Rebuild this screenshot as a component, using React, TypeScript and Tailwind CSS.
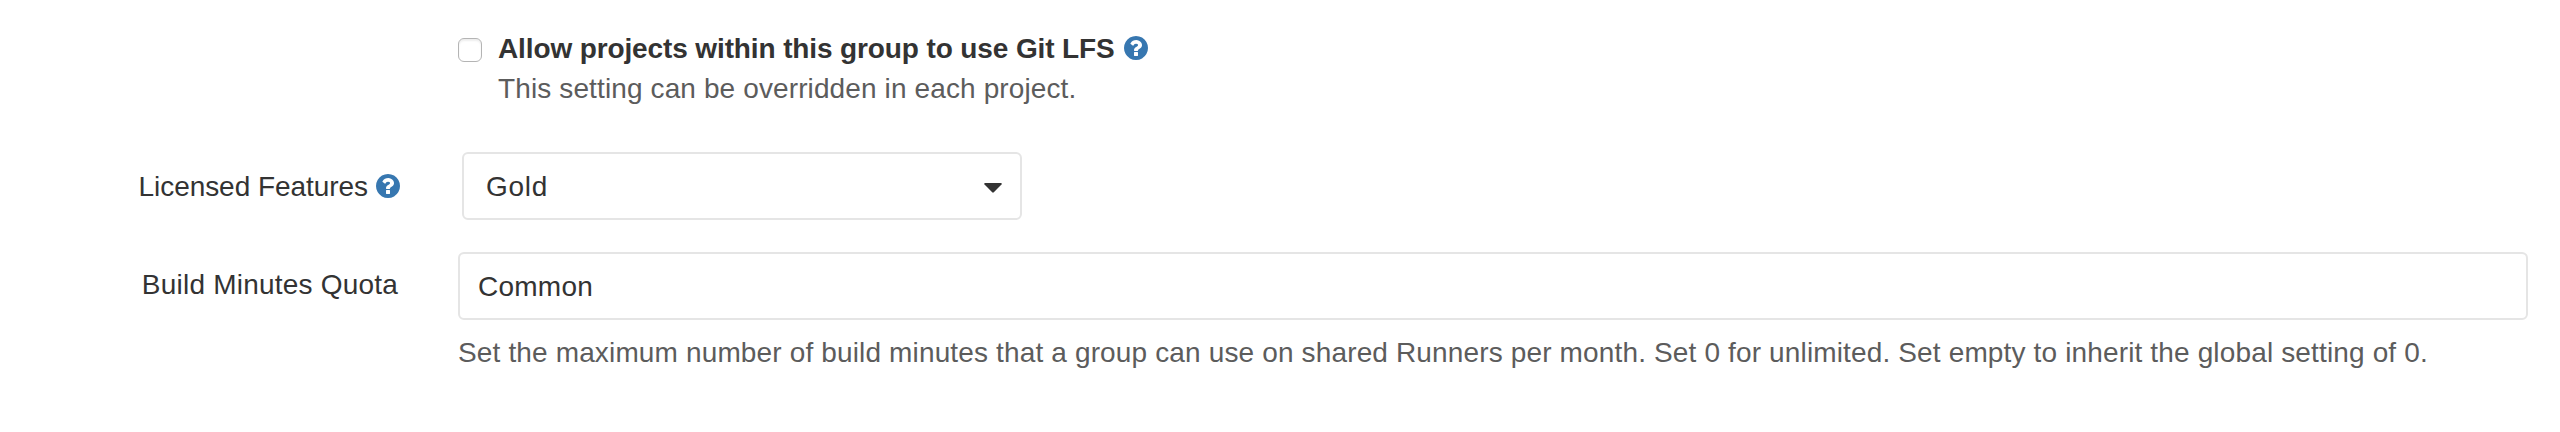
function HelpIcon({ className }: { className: string }) {
  return (
    <svg viewBox="128 128 1536 1536" className={`size-6 shrink-0 fill-[#3777b0] ${className}`} aria-hidden="true">
      <path d="M1024 1376v-192q0-14-9-23t-23-9h-192q-14 0-23 9t-9 23v192q0 14 9 23t23 9h192q14 0 23-9t9-23zm256-672q0-88-55.5-163t-138.5-116-170-41q-243 0-371 213-15 24 8 42l132 100q7 6 19 6 16 0 25-12 53-68 86-92 34-24 86-24 48 0 85.5 26t37.5 59q0 38-20 61t-68 45q-63 28-115.5 86.5t-52.5 125.5v36q0 14 9 23t23 9h192q14 0 23-9t9-23q0-19 21.5-49.5t54.5-49.5q32-18 49-28.5t46-35 44.5-48 28-60.5 12.5-81zm384 192q0 209-103 385.5t-279.5 279.5-385.5 103-385.5-103-279.5-279.5-103-385.5 103-385.5 279.5-279.5 385.5-103 385.5 103 279.5 279.5 103 385.5z" />
    </svg>
  );
}

export default function App() {
  return (
    <form className="flex h-[432px] w-[2560px] flex-col bg-white pt-[29px] font-['Liberation_Sans',Arial,sans-serif] text-[28px] leading-10 text-[#333333]">
      <div className="flex pl-[458px]">
        <input
          id="lfs"
          type="checkbox"
          className="mt-[9px] size-6 shrink-0 appearance-none rounded-[6px] border border-[#b4b4b4] bg-white shadow-[inset_0_2px_2px_#eeeeee]"
        />
        <div className="ml-4">
          <div className="flex">
            <label htmlFor="lfs" className="whitespace-nowrap font-bold tracking-[-0.12px]">
              Allow projects within this group to use Git LFS
            </label>
            <HelpIcon className="mt-[7px] ml-[9px]" />
          </div>
          <p className="whitespace-nowrap tracking-[0.12px] text-[#5c5c5c]">
            This setting can be overridden in each project.
          </p>
        </div>
      </div>

      <div className="mt-[43px] flex">
        <div className="mr-[62px] flex w-[400px] justify-end pt-[15px]">
          <span className="whitespace-nowrap tracking-[-0.05px]">Licensed Features</span>
          <HelpIcon className="mt-[7px] ml-2" />
        </div>
        <button
          type="button"
          className="flex h-[68px] w-[560px] items-center justify-between rounded-[6px] border-2 border-[#e5e5e5] bg-white pr-[18px] pl-[22px]"
        >
          <span className="pt-0.5 tracking-[0.7px]">Gold</span>
          <svg viewBox="0 0 18 10" className="mt-1 h-2.5 w-[18px] fill-[#333333]" aria-hidden="true">
            <path d="M1 0h16q1.2.4.5 1.5L9.8 9.3q-.8.8-1.6 0L.5 1.5Q-.2.4 1 0z" />
          </svg>
        </button>
      </div>

      <div className="mt-8 flex">
        <label
          htmlFor="quota"
          className="mr-[60px] w-[398px] whitespace-nowrap pt-[13px] text-right tracking-[0.21px]"
        >
          Build Minutes Quota
        </label>
        <div className="w-[2070px]">
          <input
            id="quota"
            defaultValue="Common"
            className="block h-[68px] w-full rounded-[6px] border-2 border-[#e5e5e5] bg-white px-[18px] pt-0.5 tracking-[0.25px]"
          />
          <p className="mt-[13px] whitespace-nowrap tracking-[0.146px] text-[#5c5c5c]">
            Set the maximum number of build minutes that a group can use on shared Runners per month. Set 0 for
            unlimited. Set empty to inherit the global setting of 0.
          </p>
        </div>
      </div>
    </form>
  );
}
